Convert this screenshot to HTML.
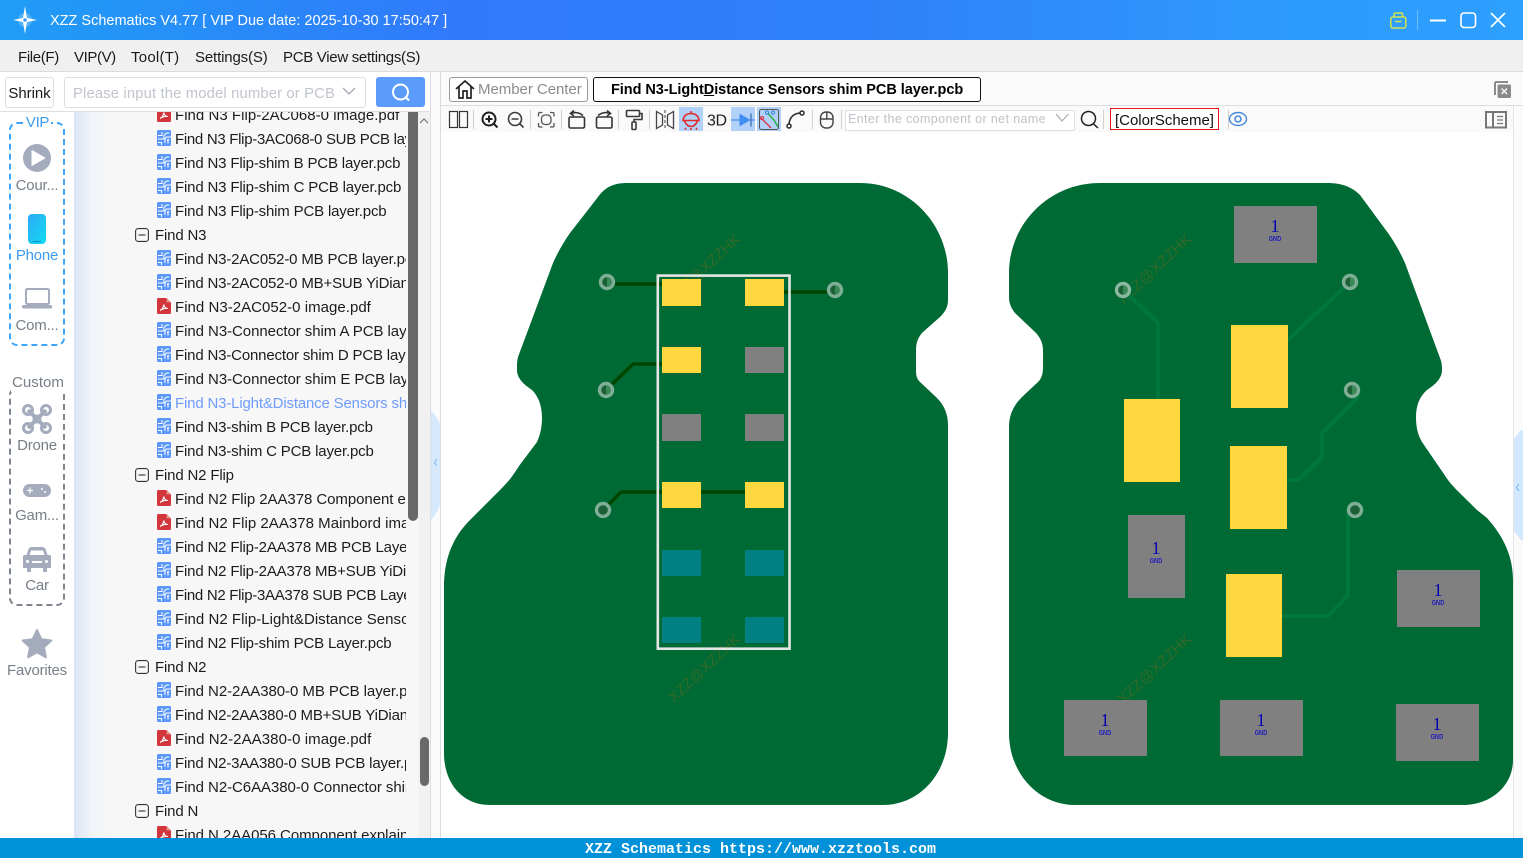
<!DOCTYPE html>
<html lang="en">
<head>
<meta charset="utf-8">
<title>XZZ Schematics</title>
<style>
html,body{margin:0;padding:0;width:1523px;height:858px;overflow:hidden;background:#fff}
body{position:relative;font-family:"Liberation Sans","Noto Sans CJK SC",sans-serif;color:#1a1a1a}
.a{position:absolute}
.t{position:absolute;white-space:nowrap;font-size:15px;line-height:20px}
#title{left:0;top:0;width:1523px;height:40px;background:linear-gradient(90deg,#1f9df6 0,#3179fb 30%,#2f7ffa 55%,#2d9dfd 88%,#2d9ffd 100%)}
#menu{left:0;top:40px;width:1523px;height:31px;background:#f0f0f0;border-bottom:1px solid #dcdcdc}
#menu span{position:absolute;top:8px;font-size:15px;line-height:20px;white-space:nowrap}
#tree{left:74px;top:112px;width:334px;height:726px;overflow:hidden;background:linear-gradient(90deg,#d9e4f5 0,#f1f4f8 18px,#f7f7f7 34px)}
.r{position:absolute;left:0;width:334px;height:24px}
.r svg{position:absolute;left:83px;top:3px;width:14px;height:16px}
.r span{position:absolute;left:101px;top:1px;width:231px;overflow:hidden;white-space:nowrap;font-size:15px;line-height:24px;letter-spacing:-.17px;color:#1c1c1c}
.r span.w{letter-spacing:-.06px}
.r span.x{letter-spacing:.03px}
.r span.y{letter-spacing:.08px}
.r span.n{letter-spacing:-.3px}
.g svg{left:61px;top:5px;width:14px;height:14px}
.g span{left:81px}
.s{position:absolute;font-size:15px;line-height:18px;color:#777f88;text-align:center;width:74px;left:0;letter-spacing:-.2px}
</style>
</head>
<body>
<svg width="0" height="0" style="position:absolute">
<symbol id="p" viewBox="0 0 14 16"><rect width="14" height="16" rx="1.500" fill="#5b97fb"/><path d="M1 5.500h4V2M1 9h6V5.500L9.500 3H12M14 7H9.500L8 8.500V13M1 12.500h3.500V15M11 10v3.500" fill="none" stroke="#fff" stroke-width="1"/><circle cx="11" cy="10" r="1" fill="#fff"/></symbol>
<symbol id="d" viewBox="0 0 14 16"><path d="M1.500 0H9.500L14 4.500V14.500A1.500 1.500 0 0 1 12.500 16H1.500A1.500 1.500 0 0 1 0 14.500V1.500A1.500 1.500 0 0 1 1.500 0Z" fill="#d2353c"/><path d="M9.500 0V4.500H14Z" fill="#e98a8d"/><path d="M3 12.500C5 11.500 6.500 9 6.800 6.500C7.200 9 9 10.500 11 10.500C9 10 5.500 10.500 3 12.500Z" fill="none" stroke="#fff" stroke-width="1.100"/></symbol>
<symbol id="m" viewBox="0 0 14 14"><rect x=".6" y=".6" width="12.800" height="12.800" rx="2.500" fill="none" stroke="#333" stroke-width="1.100"/><path d="M3.500 7h7" stroke="#333" stroke-width="1.100"/></symbol>
</svg>

<!-- title bar -->
<div class="a" id="title"></div>
<svg class="a" style="left:0;top:0" width="60" height="40">
<circle cx="25" cy="20" r="7" fill="#fff" opacity=".22"/>
<path d="M25 6L27 18L37 20L27 22L25 34L23 22L13 20L23 18Z" fill="#fff"/>
<circle cx="25" cy="20" r="1.800" fill="#3a9cf5"/>
</svg>
<div class="t" style="left:50px;top:11px;color:#fff;font-size:14.500px;letter-spacing:0">XZZ Schematics V4.77 [ VIP Due date: 2025-10-30 17:50:47 ]</div>
<svg class="a" style="left:1380px;top:0" width="143" height="40">
<rect x="10.800" y="17" width="15" height="11" rx="2" fill="none" stroke="#d5e24e" stroke-width="1.500"/>
<path d="M14 17V14.500Q14 13 15.500 13H21Q22.500 13 22.500 14.500V17M15 21.500H21.500" fill="none" stroke="#d5e24e" stroke-width="1.500"/>
<path d="M37.500 10V30" stroke="#73bafc" stroke-width="1"/>
<path d="M50 20.500H66" stroke="#fff" stroke-width="2"/>
<rect x="81" y="13" width="14.500" height="14.500" rx="3" fill="none" stroke="#fff" stroke-width="1.600"/>
<path d="M111 13L125 27M125 13L111 27" stroke="#fff" stroke-width="1.600"/>
</svg>

<!-- menu -->
<div class="a" id="menu">
<span style="left:18px;letter-spacing:-.35px">File(F)</span><span style="left:74px;letter-spacing:-.4px">VIP(V)</span><span style="left:131px;letter-spacing:.25px">Tool(T)</span><span style="left:195px;letter-spacing:-.15px">Settings(S)</span><span style="left:283px;letter-spacing:-.3px">PCB View settings(S)</span>
</div>

<!-- search row -->
<div class="a" style="left:0;top:72px;width:430px;height:39px;background:#fff;border-bottom:1px solid #dedede"></div>
<div class="a" style="left:5px;top:77px;width:47px;height:29px;border:1px solid #dcdfe6;border-radius:3px;text-align:center;line-height:31px;font-size:15px;letter-spacing:-.05px">Shrink</div>
<div class="a" style="left:64px;top:77px;width:300px;height:29px;border:1px solid #dcdfe6;border-radius:3px;background:#fff"></div>
<div class="t" style="left:73px;top:84px;color:#c0c4cc;font-size:14.800px;letter-spacing:.15px">Please input the model number or PCB</div>
<svg class="a" style="left:340px;top:84px" width="18" height="14"><path d="M3 4L9 10L15 4" fill="none" stroke="#a8abb2" stroke-width="1.400"/></svg>
<div class="a" style="left:376px;top:77px;width:49px;height:30px;background:#5a9bfb;border-radius:3px"></div>
<svg class="a" style="left:376px;top:77px" width="49" height="30"><circle cx="24.500" cy="15" r="7.500" fill="none" stroke="#fff" stroke-width="2"/><path d="M30 20.500L33 23.500" stroke="#fff" stroke-width="2"/></svg>

<!-- sidebar -->
<div class="a" style="left:0;top:112px;width:74px;height:726px;background:#fff"></div>
<div class="a" style="left:9px;top:122px;width:52px;height:220px;border:2px dashed #3fa5f8;border-radius:8px"></div>
<div class="a" style="left:24px;top:114px;width:27px;height:18px;background:#fff;color:#3d9cf0;font-size:15px;line-height:18px;text-align:center;letter-spacing:-.3px">VIP</div>
<div class="a" style="left:9px;top:387px;width:52px;height:215px;border:2px dashed #7d8590;border-radius:8px"></div>
<div class="a" style="left:11px;top:374px;width:54px;height:18px;background:#fff;color:#777f88;font-size:15px;line-height:18px;text-align:center;letter-spacing:.05px">Custom</div>
<svg class="a" style="left:0;top:112px" width="74" height="570">
<defs><linearGradient id="ph" x1="0" y1="0" x2="1" y2="1"><stop offset="0" stop-color="#2fa9f5"/><stop offset="1" stop-color="#0fdcf0"/></linearGradient></defs>
<circle cx="37" cy="46" r="14" fill="#a3abbd"/><path d="M32 38.500L45 46L32 53.500Z" fill="#fff" stroke="#fff" stroke-linejoin="round"/>
<rect x="28" y="102" width="18" height="30" rx="4" fill="url(#ph)"/><path d="M33 129.500h8" stroke="#0b8bc0" stroke-width="1"/>
<rect x="26" y="177" width="23" height="15" rx="1.500" fill="none" stroke="#a3abbd" stroke-width="2"/><rect x="22" y="193" width="30" height="3.500" rx="1.500" fill="#a3abbd"/>
<g fill="none" stroke="#a3abbd"><path d="M28 298L46 316M46 298L28 316" stroke-width="4"/><circle cx="28" cy="298" r="4.500" stroke-width="3"/><circle cx="46" cy="298" r="4.500" stroke-width="3"/><circle cx="28" cy="316" r="4.500" stroke-width="3"/><circle cx="46" cy="316" r="4.500" stroke-width="3"/><circle cx="37" cy="307" r="3.500" stroke-width="2"/></g>
<rect x="23" y="372" width="28" height="13" rx="6.500" fill="#a3abbd"/><path d="M27 378.500h6M30 375.500v6" stroke="#fff" stroke-width="1.300"/><circle cx="42" cy="377" r="1" fill="#fff"/><circle cx="45" cy="380" r="1" fill="#fff"/>
<path d="M28.500 437Q29.500 435 32 435H42Q44.500 435 45.500 437L47.500 443H49.500Q51 443 51 444.500V456H47V460H43V456H31V460H27V456H23V444.500Q23 443 24.500 443H26.500Z" fill="#a3abbd"/><path d="M29.500 443L31 438.500H43L44.500 443Z" fill="#fff"/><path d="M32 450h10" stroke="#fff" stroke-width="2"/><circle cx="27.500" cy="449.500" r="1.500" fill="#fff"/><circle cx="46.500" cy="449.500" r="1.500" fill="#fff"/>
<path d="M37 518L41.300 527.300L51.300 528.500L44 535.300L45.900 545.300L37 540.300L28.100 545.300L30 535.300L22.700 528.500L32.700 527.300Z" fill="#a3abbd" stroke="#a3abbd" stroke-width="2" stroke-linejoin="round"/>
</svg>
<div class="s" style="top:177px">Cour...</div>
<div class="s" style="top:247px;color:#3d9cf0">Phone</div>
<div class="s" style="top:317px">Com...</div>
<div class="s" style="top:437px">Drone</div>
<div class="s" style="top:507px">Gam...</div>
<div class="s" style="top:577px">Car</div>
<div class="s" style="top:662px">Favorites</div>

<!-- tree -->
<div class="a" id="tree">
<div class="r" style="top:-9px"><svg><use href="#d"/></svg><span class="x">Find N3 Flip-2AC068-0 image.pdf</span></div>
<div class="r" style="top:15px"><svg><use href="#p"/></svg><span class="n">Find N3 Flip-3AC068-0 SUB PCB layer.pcb</span></div>
<div class="r" style="top:39px"><svg><use href="#p"/></svg><span>Find N3 Flip-shim B PCB layer.pcb</span></div>
<div class="r" style="top:63px"><svg><use href="#p"/></svg><span>Find N3 Flip-shim C PCB layer.pcb</span></div>
<div class="r" style="top:87px"><svg><use href="#p"/></svg><span>Find N3 Flip-shim PCB layer.pcb</span></div>
<div class="r g" style="top:111px"><svg><use href="#m"/></svg><span>Find N3</span></div>
<div class="r" style="top:135px"><svg><use href="#p"/></svg><span>Find N3-2AC052-0 MB PCB layer.pcb</span></div>
<div class="r" style="top:159px"><svg><use href="#p"/></svg><span>Find N3-2AC052-0 MB+SUB YiDian PCB</span></div>
<div class="r" style="top:183px"><svg><use href="#d"/></svg><span class="x">Find N3-2AC052-0 image.pdf</span></div>
<div class="r" style="top:207px"><svg><use href="#p"/></svg><span class="w">Find N3-Connector shim A PCB layer.pcb</span></div>
<div class="r" style="top:231px"><svg><use href="#p"/></svg><span>Find N3-Connector shim D PCB layer.pcb</span></div>
<div class="r" style="top:255px"><svg><use href="#p"/></svg><span class="w">Find N3-Connector shim E PCB layer.pcb</span></div>
<div class="r" style="top:279px"><svg><use href="#p"/></svg><span style="color:#6f9cfb">Find N3-Light&amp;Distance Sensors shim PCB layer.pcb</span></div>
<div class="r" style="top:303px"><svg><use href="#p"/></svg><span>Find N3-shim B PCB layer.pcb</span></div>
<div class="r" style="top:327px"><svg><use href="#p"/></svg><span>Find N3-shim C PCB layer.pcb</span></div>
<div class="r g" style="top:351px"><svg><use href="#m"/></svg><span>Find N2 Flip</span></div>
<div class="r" style="top:375px"><svg><use href="#d"/></svg><span class="w">Find N2 Flip 2AA378 Component explain</span></div>
<div class="r" style="top:399px"><svg><use href="#d"/></svg><span class="x">Find N2 Flip 2AA378 Mainbord image.pdf</span></div>
<div class="r" style="top:423px"><svg><use href="#p"/></svg><span>Find N2 Flip-2AA378 MB PCB Layer.pcb</span></div>
<div class="r" style="top:447px"><svg><use href="#p"/></svg><span>Find N2 Flip-2AA378 MB+SUB YiDian PCB</span></div>
<div class="r" style="top:471px"><svg><use href="#p"/></svg><span class="n">Find N2 Flip-3AA378 SUB PCB Layer.pcb</span></div>
<div class="r" style="top:495px"><svg><use href="#p"/></svg><span class="x">Find N2 Flip-Light&amp;Distance Sensor shim</span></div>
<div class="r" style="top:519px"><svg><use href="#p"/></svg><span>Find N2 Flip-shim PCB Layer.pcb</span></div>
<div class="r g" style="top:543px"><svg><use href="#m"/></svg><span>Find N2</span></div>
<div class="r" style="top:567px"><svg><use href="#p"/></svg><span class="w">Find N2-2AA380-0 MB PCB layer.pcb</span></div>
<div class="r" style="top:591px"><svg><use href="#p"/></svg><span>Find N2-2AA380-0 MB+SUB YiDian PCB</span></div>
<div class="r" style="top:615px"><svg><use href="#d"/></svg><span class="y">Find N2-2AA380-0 image.pdf</span></div>
<div class="r" style="top:639px"><svg><use href="#p"/></svg><span>Find N2-3AA380-0 SUB PCB layer.pcb</span></div>
<div class="r" style="top:663px"><svg><use href="#p"/></svg><span class="w">Find N2-C6AA380-0 Connector shim PCB</span></div>
<div class="r g" style="top:687px"><svg><use href="#m"/></svg><span>Find N</span></div>
<div class="r" style="top:711px"><svg><use href="#d"/></svg><span class="w">Find N 2AA056 Component explain</span></div>
</div>
<!-- scrollbars -->
<div class="a" style="left:408px;top:112px;width:10px;height:409px;background:#696969;border-radius:0 0 5px 5px"></div>
<div class="a" style="left:408px;top:521px;width:10px;height:317px;background:#f7f7f7"></div>
<div class="a" style="left:418px;top:112px;width:12px;height:726px;background:#f1f1f1"></div>
<div class="a" style="left:420px;top:737px;width:9px;height:49px;background:#696969;border-radius:5px"></div>
<svg class="a" style="left:418px;top:112px" width="12" height="16"><path d="M2 11L6 7L10 11" fill="none" stroke="#666" stroke-width="1"/></svg>
<div class="a" style="left:430px;top:72px;width:1px;height:766px;background:#dedede"></div>
<div class="a" style="left:440px;top:72px;width:1px;height:766px;background:#dcdcdc"></div>
<div class="a" style="left:431px;top:72px;width:9px;height:766px;background:#fbfbfb"></div>
<svg class="a" style="left:431px;top:405px" width="10" height="120"><path d="M0 5L6 13Q9 17 9 22V98Q9 103 6 107L0 115Z" fill="#d6e9fc"/><path d="M6 54L3.500 57.500L6 61" fill="none" stroke="#79b4ee" stroke-width="1"/></svg>

<!-- tabs row -->
<div class="a" style="left:441px;top:72px;width:1082px;height:33px;background:#fbfbfb;border-bottom:1px solid #dedede"></div>
<div class="a" style="left:449px;top:77px;width:137px;height:23px;border:1px solid #9a9a9a;border-radius:3px;background:#fff"></div>
<svg class="a" style="left:454px;top:78px" width="22" height="22"><path d="M2 11L11 3L20 11M5 9V20H9V13H13V20H17V9" fill="none" stroke="#222" stroke-width="1.700"/></svg>
<div class="t" style="left:478px;top:80px;color:#8b8b8b;font-size:15px;letter-spacing:-.04px">Member Center</div>
<div class="a" style="left:593px;top:77px;width:386px;height:23px;border:1px solid #111;border-radius:3px;background:#fff"></div>
<div class="t" style="left:611px;top:80px;font-weight:bold;font-size:14.500px;color:#000;letter-spacing:-.05px">Find N3-Light<u>D</u>istance Sensors shim PCB layer.pcb</div>
<svg class="a" style="left:1490px;top:78px" width="26" height="24"><path d="M5 17V5.500Q5 4 6.500 4H18" fill="none" stroke="#8a8a8a" stroke-width="2"/><rect x="7.500" y="6.500" width="13.500" height="13.500" rx="1.500" fill="#8a8a8a"/><path d="M11.500 10.500L17 16M17 10.500L11.500 16" stroke="#fff" stroke-width="1.300"/></svg>

<!-- toolbar -->
<div class="a" style="left:441px;top:106px;width:1072px;height:26px;background:#fafafa"></div>
<div class="a" style="left:679px;top:107px;width:24px;height:24px;background:#b2d1f8"></div>
<div class="a" style="left:731px;top:107px;width:24px;height:24px;background:#b2d1f8"></div>
<div class="a" style="left:757px;top:107px;width:24px;height:24px;background:#b2d1f8"></div>
<div class="a" style="left:845px;top:110px;width:228px;height:19px;border:1px solid #dcdfe6;border-radius:2px;background:#fff"></div>
<div class="t" style="left:848px;top:109px;font-size:12.500px;color:#bfc2c8;letter-spacing:.38px;width:200px;overflow:hidden">Enter the component or net name</div>
<div class="a" style="left:1110px;top:108px;width:107px;height:20px;border:1px solid #e8141c;background:#fff"></div>
<div class="t" style="left:1115px;top:111px;font-size:15px;letter-spacing:-.02px;color:#111">[ColorScheme]</div>
<svg class="a" style="left:0;top:0" width="1523" height="140">
<g fill="none" stroke="#333" stroke-width="1.200">
<rect x="449.500" y="111.500" width="8" height="16"/><rect x="459.500" y="111.500" width="8" height="16"/>
</g>
<g stroke="#d0d0d0" stroke-width="1"><path d="M473.500 110V129M530.500 110V129M561.500 110V129M618.500 110V129M649.500 110V129M812.500 110V129M841.500 110V129M1103.500 110V129M1228.500 110V129"/></g>
<g fill="none" stroke="#1e1e1e" stroke-width="2"><circle cx="489" cy="119" r="6.500"/><path d="M485.500 119H492.500M489 115.500V122.500"/><path d="M494 124L497.500 127.500"/></g>
<g fill="none" stroke="#3a3a3a" stroke-width="1.600"><circle cx="515" cy="119" r="6.500"/><path d="M511.500 119H518.500M520 124L523.500 127.500"/></g>
<g fill="none" stroke="#555" stroke-width="1.300"><path d="M538.500 116.500V114Q538.500 112.500 540 112.500H542.500M550 112.500H552.500Q554 112.500 554 114V116.500M554 123V125.500Q554 127 552.500 127H550M542.500 127H540Q538.500 127 538.500 125.500V123"/><rect x="541.500" y="115" width="9.500" height="9.500" rx="3.500"/></g>
<g fill="none" stroke="#333" stroke-width="1.600"><rect x="569" y="117" width="15.500" height="11" rx="1.500"/><path d="M571 113.500Q577 111 583 115.500M574 110.500L570.500 113.500L574 116"/><rect x="596.500" y="117" width="15.500" height="11" rx="1.500"/><path d="M610 113.500Q604 111 598 115.500M607 110.500L610.500 113.500L607 116"/></g>
<g fill="none" stroke="#3a3a3a" stroke-width="1.600"><rect x="626.500" y="110.500" width="13" height="6" rx="1"/><path d="M639.500 113.500H642V119.500H634V122"/><rect x="632" y="122" width="4" height="7.500" rx="1"/></g>
<g fill="none" stroke="#444" stroke-width="1.300"><path d="M656.500 111.500L662.500 115V125L656.500 128.500ZM673.500 111.500L667.500 115V125L673.500 128.500Z"/><path d="M665 110V130" stroke-width="1" stroke-dasharray="3 2"/></g>
<g fill="none" stroke="#e02a2a" stroke-width="1.600"><path d="M683 120.500Q684 113.500 691 113.500Q698 113.500 699 120.500ZM691 111V113.500M684.500 121Q687 126.500 691 126.500Q695 126.500 697.500 121M686 128L685 129.500M691 128V130M696 128L697 129.500"/></g>
<text x="707" y="125.500" font-family="Liberation Sans,sans-serif" font-size="16" fill="#222" letter-spacing="-.4">3D</text>
<path d="M731 120H755" stroke="#4a8ef0" stroke-width="1.300"/><path d="M739.500 113.500L750.500 120L739.500 126.500Z" fill="#3f8ef3"/><path d="M751 113.500V126.500" stroke="#3f6fc0" stroke-width="1.300"/>
<rect x="759.500" y="109.500" width="19" height="20" rx="2" fill="none" stroke="#555" stroke-width="1"/>
<path d="M768 113.500L774 120L778 127" fill="none" stroke="#1daa3a" stroke-width="1.300"/><path d="M761 118L771 128" fill="none" stroke="#e02a3c" stroke-width="1.300"/><circle cx="773" cy="112.500" r="1.600" fill="none" stroke="#2f7fd8"/><circle cx="767" cy="112.500" r="1.600" fill="none" stroke="#2f7fd8"/><circle cx="762" cy="118" r="1.600" fill="none" stroke="#e02a3c"/>
<g fill="none" stroke="#2a2a2a" stroke-width="1.500"><circle cx="789" cy="126" r="2"/><circle cx="802" cy="113" r="2"/><path d="M789 124Q790 114 800 113"/></g>
<g fill="none" stroke="#444" stroke-width="1.400"><rect x="820.500" y="112" width="12.500" height="16" rx="5.500"/><path d="M820.500 119H833M826.800 112V119"/></g>
<path d="M1056 114L1062 121L1068.500 114" fill="none" stroke="#a8abb2" stroke-width="1.200"/>
<g fill="none" stroke="#222" stroke-width="1.500"><circle cx="1088.500" cy="118.500" r="7"/><path d="M1093.500 124L1098 128"/></g>
<g fill="none" stroke="#4a88dd"><ellipse cx="1238" cy="119" rx="8.500" ry="6.500" stroke-width="1.400"/><circle cx="1238" cy="119" r="3" stroke-width="1.600"/></g>
<g fill="none" stroke="#777" stroke-width="2"><rect x="1486" y="112" width="20" height="15.500"/><path d="M1493 112V127.500"/><path d="M1497 116.500H1503M1497 120H1503M1497 123.500H1503" stroke-width="1.300"/></g>
</svg>

<!-- canvas -->
<div class="a" style="left:441px;top:132px;width:1072px;height:706px;background:#fff"></div>
<div class="a" style="left:1513px;top:106px;width:10px;height:732px;background:#fbfbfb;border-left:1px solid #e4e4e4;box-sizing:border-box"></div>
<svg class="a" style="left:1513px;top:425px" width="10" height="120"><path d="M1 14L8 5H10V115H8L1 106Z" fill="#d2e8fe"/><path d="M6 59L3.500 62.500L6 66" fill="none" stroke="#79b4ee" stroke-width="1"/></svg>

<svg class="a" style="left:0;top:0" width="1523" height="858">
<!-- left board -->
<path d="M627 183H860C910 183 948 225 948 273V300C948 308 944 313 940 317L923 332C918 337 916 343 916 350V370C916 376 917 379 920 382L937 398C944 405 948 414 948 425V733C948 773 920 805 883 805H490C462 805 444 783 444 753V587C444 560 452 538 470 520L500 490C509 481 512 477 519 466L537 442C540 435 542 428 542 418C542 405 538 396 532 390C523 384 517 378 517 370C517 364 517 361 518 357L553 263C558 252 563 243 570 233L598 197C605 187 614 183 627 183Z" fill="#006a35"/>
<g font-family="Liberation Sans,sans-serif" font-size="15" fill="#3a6a26" opacity=".85">
<text transform="translate(674,703) rotate(-43)" textLength="92" lengthAdjust="spacingAndGlyphs">XZZ@XZZHK</text>
<text transform="translate(674,303) rotate(-43)" textLength="92" lengthAdjust="spacingAndGlyphs">XZZ@XZZHK</text>
</g>
<g fill="none" stroke="#004600" stroke-width="3.600">
<path d="M607 284H662"/><path d="M784 292H835"/><path d="M606 390L633 364H662"/><path d="M603 510L621 492H745"/>
</g>
<rect x="657.800" y="275.600" width="131.700" height="373.100" fill="none" stroke="#e6e6e6" stroke-width="2.600"/>
<g fill="#ffd83f">
<rect x="662" y="279" width="39" height="27"/><rect x="745" y="279" width="39" height="27"/>
<rect x="662" y="347" width="39" height="26"/>
<rect x="662" y="482" width="39" height="26"/><rect x="745" y="482" width="39" height="26"/>
</g>
<g fill="#808080"><rect x="745" y="347" width="39" height="26"/><rect x="662" y="414" width="39" height="27"/><rect x="745" y="414" width="39" height="27"/></g>
<g fill="#008080"><rect x="662" y="550" width="39" height="26"/><rect x="745" y="550" width="39" height="26"/><rect x="662" y="617" width="39" height="26"/><rect x="745" y="617" width="39" height="26"/></g>

<!-- right board -->
<path d="M1100 183H1327C1342 183 1352 187 1360 195L1388 233C1395 243 1400 252 1405 263L1440 358C1442 363 1442 366 1442 370C1442 378 1436 384 1427 390C1420 396 1416 405 1416 417C1416 428 1418 435 1422 442L1448 480C1454 488 1460 493 1477 510L1487 518C1504 537 1513 557 1513 580V760C1513 785 1492 805 1463 805H1075C1038 805 1009 773 1009 733V427C1009 414 1014 405 1022 397L1038 382C1042 378 1043 373 1043 367V350C1043 343 1040 337 1035 332L1015 313C1011 308 1009 303 1009 297V273C1009 225 1048 183 1100 183Z" fill="#006a35"/>
<g font-family="Liberation Sans,sans-serif" font-size="15" fill="#3a6a26" opacity=".85">
<text transform="translate(1123,305) rotate(-43)" textLength="95" lengthAdjust="spacingAndGlyphs">XZZ@XZZHK</text>
<text transform="translate(1123,705) rotate(-43)" textLength="95" lengthAdjust="spacingAndGlyphs">XZZ@XZZHK</text>
</g>
<g fill="none" stroke="#00773b" stroke-width="3.800">
<path d="M1123 290L1158 323V399"/><path d="M1350 282L1288 340"/><path d="M1360 395L1322 433V457L1298 480H1287"/><path d="M1348 510V595L1328 616H1282"/>
</g>
<g fill="#ffd83f">
<rect x="1231" y="325" width="57" height="83"/><rect x="1124" y="399" width="56" height="83"/><rect x="1230" y="446" width="57" height="83"/><rect x="1226" y="574" width="56" height="83"/>
</g>
<g fill="#808080">
<rect x="1234" y="206" width="83" height="57"/><rect x="1128" y="515" width="57" height="83"/><rect x="1397" y="570" width="83" height="57"/><rect x="1064" y="700" width="83" height="56"/><rect x="1220" y="700" width="83" height="56"/><rect x="1396" y="704" width="83" height="57"/>
</g>
<g fill="#0000b0" text-anchor="middle">
<g font-family="Liberation Serif,serif" font-size="18"><text x="1275" y="232">1</text><text x="1156" y="554">1</text><text x="1438" y="596">1</text><text x="1105" y="726">1</text><text x="1261" y="726">1</text><text x="1437" y="730">1</text></g>
<g font-family="Liberation Mono,monospace" font-size="7" fill="#0000d0"><text x="1275" y="241">GND</text><text x="1156" y="563">GND</text><text x="1438" y="605">GND</text><text x="1105" y="735">GND</text><text x="1261" y="735">GND</text><text x="1437" y="739">GND</text></g>
</g>
<!-- vias -->
<g stroke="#7fae96" stroke-width="3.400" fill="#1c5f35">
<circle cx="607" cy="282" r="6.500"/><circle cx="835" cy="290" r="6.500"/><circle cx="606" cy="390" r="6.500"/><circle cx="603" cy="510" r="6.500"/><circle cx="1123" cy="290" r="6.500" stroke="#8ab8a0"/><circle cx="1350" cy="282" r="6.500"/><circle cx="1352" cy="390" r="6.500"/><circle cx="1355" cy="510" r="6.500"/>
</g>
<g fill="#3a8a58">
<path d="M607 277.300A4.700 4.700 0 0 1 607 286.700Z"/><path d="M835 285.300A4.700 4.700 0 0 1 835 294.700Z"/><path d="M606 385.300A4.700 4.700 0 0 1 606 394.700Z"/><path d="M1123 285.300A4.700 4.700 0 0 1 1123 294.700Z"/><path d="M1350 277.300A4.700 4.700 0 0 1 1350 286.700Z"/><path d="M1352 385.300A4.700 4.700 0 0 1 1352 394.700Z"/>
</g>
</svg>

<!-- status bar -->
<div class="a" style="left:0;top:838px;width:1523px;height:20px;background:#0091d8;color:#fff;font-family:'Liberation Mono',monospace;font-size:15px;line-height:20px;white-space:pre"><span style="position:absolute;left:585px;top:2px;font-weight:bold">XZZ Schematics https://www.xzztools.com</span></div>
</body>
</html>
